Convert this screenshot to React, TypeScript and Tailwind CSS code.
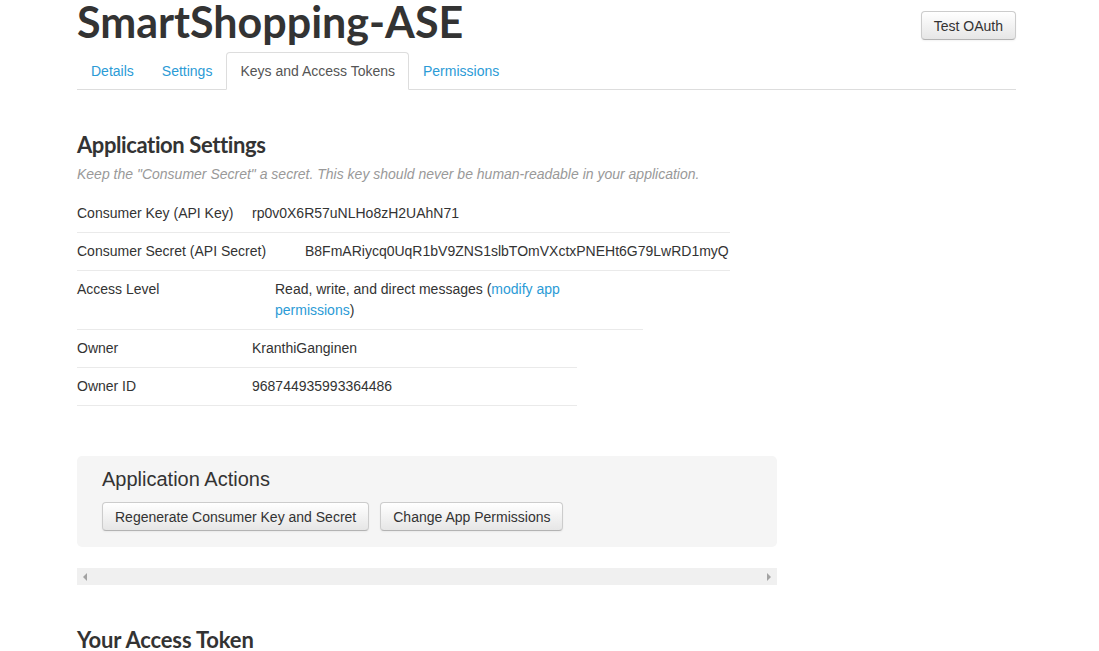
import React from "react";

const body = { fontFamily: '"Liberation Sans", Arial, Helvetica, sans-serif' };
const head = { fontFamily: 'Lato, "Liberation Sans", Arial, sans-serif' };

function GrayButton({ children }: { children: React.ReactNode }) {
  return (
    <button className="h-[29px] px-[12px] text-[14px] leading-[20px] text-[#333] rounded-[4px] border border-[#ccc] border-b-[#b3b3b3] bg-gradient-to-b from-white to-[#e6e6e6] shadow-[0_1px_2px_rgba(0,0,0,0.05)] whitespace-nowrap">
      {children}
    </button>
  );
}

export default function App() {
  const tabs = [
    { name: "Details", active: false },
    { name: "Settings", active: false },
    { name: "Keys and Access Tokens", active: true },
    { name: "Permissions", active: false },
  ];

  return (
    <div className="min-h-screen bg-white text-[#333]" style={body}>
      <div className="ml-[77px] w-[939px]">
        {/* Header */}
        <div className="flex justify-between items-start pt-[4px]">
          <h1 className="text-[43px] leading-[43px] -mt-[4px] font-bold text-[#333]" style={head}>
            SmartShopping-ASE
          </h1>
          <div className="mt-[7px]">
            <GrayButton>Test OAuth</GrayButton>
          </div>
        </div>

        {/* Tabs */}
        <ul className="mt-[9px] flex border-b border-[#ddd]">
          {tabs.map((tab) => (
            <li key={tab.name} className="mb-[-1px]">
              <a
                className={
                  tab.active
                    ? "block px-[13px] py-[8px] text-[14px] leading-[20px] rounded-t-[4px] border border-[#ddd] border-b-white bg-white text-[#555]"
                    : "block px-[13px] py-[8px] text-[14px] leading-[20px] rounded-t-[4px] border border-transparent text-[#2b9bd6]"
                }
              >
                {tab.name}
              </a>
            </li>
          ))}
        </ul>

        {/* Application Settings */}
        <h2 className="mt-[42px] text-[22px] leading-[26px] font-bold text-[#333] tracking-[-0.4px]" style={head}>
          Application Settings
        </h2>
        <p className="mt-[6px] text-[14px] leading-[20px] italic text-[#999]">
          Keep the "Consumer Secret" a secret. This key should never be human-readable in your application.
        </p>

        <div className="mt-[11px] text-[14px] leading-[21px]">
          <div className="w-[653px] flex py-[8px] border-b border-[#eaeaea]">
            <span className="w-[175px] shrink-0">Consumer Key (API Key)</span>
            <span className="whitespace-nowrap">rp0v0X6R57uNLHo8zH2UAhN71</span>
          </div>
          <div className="w-[653px] flex py-[8px] border-b border-[#eaeaea]">
            <span className="w-[228px] shrink-0">Consumer Secret (API Secret)</span>
            <span className="whitespace-nowrap">B8FmARiycq0UqR1bV9ZNS1slbTOmVXctxPNEHt6G79LwRD1myQ</span>
          </div>
          <div className="w-[566px] flex py-[8px] border-b border-[#eaeaea]">
            <span className="w-[198px] shrink-0">Access Level</span>
            <span className="w-[300px]">
              Read, write, and direct messages (<a className="text-[#2b9bd6]">modify app permissions</a>)
            </span>
          </div>
          <div className="w-[500px] flex py-[8px] border-b border-[#eaeaea]">
            <span className="w-[175px] shrink-0">Owner</span>
            <span>KranthiGanginen</span>
          </div>
          <div className="w-[500px] flex py-[8px] border-b border-[#eaeaea]">
            <span className="w-[175px] shrink-0">Owner ID</span>
            <span>968744935993364486</span>
          </div>
        </div>

        {/* Application Actions */}
        <div className="mt-[50px] w-[700px] bg-[#f5f5f5] rounded-[5px] pl-[25px] pt-[11px] pb-[16px]">
          <h3 className="text-[20px] leading-[24px] text-[#333]">Application Actions</h3>
          <div className="mt-[11px] flex gap-[11px]">
            <GrayButton>Regenerate Consumer Key and Secret</GrayButton>
            <GrayButton>Change App Permissions</GrayButton>
          </div>
        </div>

        {/* Horizontal scrollbar */}
        <div className="mt-[21px] w-[700px] h-[17px] bg-[#f0f0f0] flex items-center justify-between px-[6px]">
          <span className="w-0 h-0 border-y-[4px] border-y-transparent border-r-[4px] border-r-[#a3a3a3]" />
          <span className="w-0 h-0 border-y-[4px] border-y-transparent border-l-[4px] border-l-[#a3a3a3]" />
        </div>

        {/* Your Access Token */}
        <h2 className="mt-[42px] text-[22px] leading-[26px] font-bold text-[#333] tracking-[-0.15px]" style={head}>
          Your Access Token
        </h2>
        <div className="h-[40px]" />
      </div>
    </div>
  );
}
